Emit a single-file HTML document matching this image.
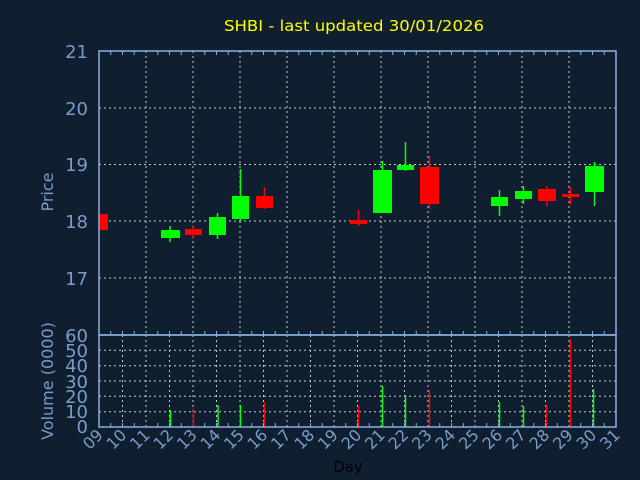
<!DOCTYPE html>
<html><head><meta charset="utf-8"><style>
html,body{margin:0;padding:0;background:#0f1f30;}
svg{display:block;}
text{font-family:"DejaVu Sans","Liberation Sans",sans-serif;}
</style></head><body>
<svg width="640" height="480" viewBox="0 0 640 480" xmlns="http://www.w3.org/2000/svg">
<rect width="640" height="480" fill="#0f1f30"/>
<text x="224" y="31" font-size="15.5" fill="#ffff00" textLength="260" lengthAdjust="spacingAndGlyphs">SHBI - last updated 30/01/2026</text>
<!-- price grid -->
<g stroke="#c8c8c8" stroke-width="1" stroke-dasharray="2,3">
<line x1="99" y1="108" x2="616" y2="108"/><line x1="99" y1="164.5" x2="616" y2="164.5"/>
<line x1="99" y1="221" x2="616" y2="221"/><line x1="99" y1="278" x2="616" y2="278"/>
<line x1="146" y1="51" x2="146" y2="335"/><line x1="193" y1="51" x2="193" y2="335"/>
<line x1="240" y1="51" x2="240" y2="335"/><line x1="287" y1="51" x2="287" y2="335"/>
<line x1="334" y1="51" x2="334" y2="335"/><line x1="381" y1="51" x2="381" y2="335"/>
<line x1="428" y1="51" x2="428" y2="335"/><line x1="475" y1="51" x2="475" y2="335"/>
<line x1="522" y1="51" x2="522" y2="335"/><line x1="569" y1="51" x2="569" y2="335"/>
</g>
<!-- volume grid -->
<g stroke="#c8c8c8" stroke-width="1" stroke-dasharray="2,3">
<line x1="99" y1="350.3" x2="616" y2="350.3"/><line x1="99" y1="365.7" x2="616" y2="365.7"/>
<line x1="99" y1="381" x2="616" y2="381"/><line x1="99" y1="396.3" x2="616" y2="396.3"/>
<line x1="99" y1="411.7" x2="616" y2="411.7"/>
<line x1="122.5" y1="335" x2="122.5" y2="427"/><line x1="146" y1="335" x2="146" y2="427"/>
<line x1="169.5" y1="335" x2="169.5" y2="427"/><line x1="193" y1="335" x2="193" y2="427"/>
<line x1="216.5" y1="335" x2="216.5" y2="427"/><line x1="240" y1="335" x2="240" y2="427"/>
<line x1="263.5" y1="335" x2="263.5" y2="427"/><line x1="287" y1="335" x2="287" y2="427"/>
<line x1="310.5" y1="335" x2="310.5" y2="427"/><line x1="334" y1="335" x2="334" y2="427"/>
<line x1="357.5" y1="335" x2="357.5" y2="427"/><line x1="381" y1="335" x2="381" y2="427"/>
<line x1="404.5" y1="335" x2="404.5" y2="427"/><line x1="428" y1="335" x2="428" y2="427"/>
<line x1="451.5" y1="335" x2="451.5" y2="427"/><line x1="475" y1="335" x2="475" y2="427"/>
<line x1="498.5" y1="335" x2="498.5" y2="427"/><line x1="522" y1="335" x2="522" y2="427"/>
<line x1="545.5" y1="335" x2="545.5" y2="427"/><line x1="569" y1="335" x2="569" y2="427"/>
<line x1="592.5" y1="335" x2="592.5" y2="427"/>
</g>
<!-- candles -->
<g stroke-width="1.5">
<rect x="99" y="214" width="9" height="16" fill="#ff0000"/>
<line x1="170" y1="226" x2="170" y2="242" stroke="#00ff00"/><rect x="161" y="230" width="19" height="8" fill="#00ff00"/>
<line x1="193.5" y1="225" x2="193.5" y2="239" stroke="#ff0000"/><rect x="185" y="229" width="17" height="6" fill="#ff0000"/>
<line x1="217.5" y1="213" x2="217.5" y2="239" stroke="#00ff00"/><rect x="209" y="217" width="17" height="18" fill="#00ff00"/>
<line x1="240.5" y1="169" x2="240.5" y2="221" stroke="#00ff00"/><rect x="232" y="196" width="17" height="23" fill="#00ff00"/>
<line x1="264.5" y1="187" x2="264.5" y2="209" stroke="#ff0000"/><rect x="256" y="196" width="17" height="12" fill="#ff0000"/>
<line x1="358.5" y1="210" x2="358.5" y2="226" stroke="#ff0000"/><rect x="350" y="220" width="17" height="4" fill="#ff0000"/>
<line x1="382.5" y1="161" x2="382.5" y2="213" stroke="#00ff00"/><rect x="373" y="170" width="19" height="43" fill="#00ff00"/>
<line x1="405.5" y1="142" x2="405.5" y2="171" stroke="#00ff00"/><rect x="397" y="165" width="17" height="5" fill="#00ff00"/>
<line x1="429.5" y1="156" x2="429.5" y2="209" stroke="#ff0000"/><rect x="420" y="167" width="19" height="37" fill="#ff0000"/>
<line x1="499.5" y1="190" x2="499.5" y2="216" stroke="#00ff00"/><rect x="491" y="197" width="17" height="9" fill="#00ff00"/>
<line x1="523.5" y1="186" x2="523.5" y2="204" stroke="#00ff00"/><rect x="515" y="191" width="17" height="8" fill="#00ff00"/>
<line x1="547" y1="186" x2="547" y2="206" stroke="#ff0000"/><rect x="538" y="189" width="18" height="12" fill="#ff0000"/>
<line x1="570.5" y1="187" x2="570.5" y2="205" stroke="#ff0000"/><rect x="562" y="194" width="17" height="3" fill="#ff0000"/>
<line x1="594.5" y1="162" x2="594.5" y2="206" stroke="#00ff00"/><rect x="585" y="166" width="19" height="26" fill="#00ff00"/>
</g>
<!-- volume bars -->
<g stroke-width="1.5">
<line x1="170.5" y1="410" x2="170.5" y2="427" stroke="#00ff00"/>
<line x1="193.5" y1="409" x2="193.5" y2="427" stroke="#ff0000"/>
<line x1="218" y1="405" x2="218" y2="427" stroke="#00ff00"/>
<line x1="240.5" y1="405" x2="240.5" y2="427" stroke="#00ff00"/>
<line x1="264.5" y1="402" x2="264.5" y2="427" stroke="#ff0000"/>
<line x1="358.5" y1="406" x2="358.5" y2="427" stroke="#ff0000"/>
<line x1="382.5" y1="386" x2="382.5" y2="427" stroke="#00ff00"/>
<line x1="405.5" y1="395" x2="405.5" y2="427" stroke="#00ff00"/>
<line x1="429.5" y1="390" x2="429.5" y2="427" stroke="#ff0000"/>
<line x1="499.5" y1="402" x2="499.5" y2="427" stroke="#00ff00"/>
<line x1="523.5" y1="406" x2="523.5" y2="427" stroke="#00ff00"/>
<line x1="546.5" y1="405" x2="546.5" y2="427" stroke="#ff0000"/>
<line x1="570.5" y1="339" x2="570.5" y2="427" stroke="#ff0000"/>
<line x1="593.5" y1="389" x2="593.5" y2="427" stroke="#00ff00"/>
</g>
<!-- frames -->
<g stroke="#8aaee0" stroke-width="1.5" fill="none">
<rect x="99" y="51" width="517" height="284"/>
<rect x="99" y="335" width="517" height="92"/>
</g>
<!-- minor ticks -->
<g stroke="#8aaee0" stroke-width="1">
<path d="M110.75 51v4M122.5 51v4M134.25 51v4M157.75 51v4M169.5 51v4M181.25 51v4M204.75 51v4M216.5 51v4M228.25 51v4M251.75 51v4M263.5 51v4M275.25 51v4M298.75 51v4M310.5 51v4M322.25 51v4M345.75 51v4M357.5 51v4M369.25 51v4M392.75 51v4M404.5 51v4M416.25 51v4M439.75 51v4M451.5 51v4M463.25 51v4M486.75 51v4M498.5 51v4M510.25 51v4M533.75 51v4M545.5 51v4M557.25 51v4M580.75 51v4M592.5 51v4M604.25 51v4"/>
<path d="M110.75 335v-4M122.5 335v-4M134.25 335v-4M157.75 335v-4M169.5 335v-4M181.25 335v-4M204.75 335v-4M216.5 335v-4M228.25 335v-4M251.75 335v-4M263.5 335v-4M275.25 335v-4M298.75 335v-4M310.5 335v-4M322.25 335v-4M345.75 335v-4M357.5 335v-4M369.25 335v-4M392.75 335v-4M404.5 335v-4M416.25 335v-4M439.75 335v-4M451.5 335v-4M463.25 335v-4M486.75 335v-4M498.5 335v-4M510.25 335v-4M533.75 335v-4M545.5 335v-4M557.25 335v-4M580.75 335v-4M592.5 335v-4M604.25 335v-4"/>
<path d="M110.75 427v-4M122.5 427v-4M134.25 427v-4M157.75 427v-4M169.5 427v-4M181.25 427v-4M204.75 427v-4M216.5 427v-4M228.25 427v-4M251.75 427v-4M263.5 427v-4M275.25 427v-4M298.75 427v-4M310.5 427v-4M322.25 427v-4M345.75 427v-4M357.5 427v-4M369.25 427v-4M392.75 427v-4M404.5 427v-4M416.25 427v-4M439.75 427v-4M451.5 427v-4M463.25 427v-4M486.75 427v-4M498.5 427v-4M510.25 427v-4M533.75 427v-4M545.5 427v-4M557.25 427v-4M580.75 427v-4M592.5 427v-4M604.25 427v-4"/>
</g>
<!-- y labels -->
<g fill="#7a9cc8" font-size="18" text-anchor="end">
<text x="88" y="58">21</text><text x="88" y="115">20</text><text x="88" y="171">19</text>
<text x="88" y="228">18</text><text x="88" y="285">17</text>
<text x="88" y="342">60</text><text x="88" y="357">50</text><text x="88" y="372">40</text>
<text x="88" y="388">30</text><text x="88" y="403">20</text><text x="88" y="418">10</text><text x="88" y="433">0</text>
</g>
<text transform="translate(53,192) rotate(-90)" fill="#7a9cc8" font-size="16" text-anchor="middle">Price</text>
<text transform="translate(53,381) rotate(-90)" fill="#7a9cc8" font-size="16" text-anchor="middle">Volume (0000)</text>
<!-- x labels -->
<g fill="#7a9cc8" font-size="16" text-anchor="end">
<text transform="translate(104,436) rotate(-45)">09</text>
<text transform="translate(127.5,436) rotate(-45)">10</text>
<text transform="translate(151,436) rotate(-45)">11</text>
<text transform="translate(174.5,436) rotate(-45)">12</text>
<text transform="translate(198,436) rotate(-45)">13</text>
<text transform="translate(221.5,436) rotate(-45)">14</text>
<text transform="translate(245,436) rotate(-45)">15</text>
<text transform="translate(268.5,436) rotate(-45)">16</text>
<text transform="translate(292,436) rotate(-45)">17</text>
<text transform="translate(315.5,436) rotate(-45)">18</text>
<text transform="translate(339,436) rotate(-45)">19</text>
<text transform="translate(362.5,436) rotate(-45)">20</text>
<text transform="translate(386,436) rotate(-45)">21</text>
<text transform="translate(409.5,436) rotate(-45)">22</text>
<text transform="translate(433,436) rotate(-45)">23</text>
<text transform="translate(456.5,436) rotate(-45)">24</text>
<text transform="translate(480,436) rotate(-45)">25</text>
<text transform="translate(503.5,436) rotate(-45)">26</text>
<text transform="translate(527,436) rotate(-45)">27</text>
<text transform="translate(550.5,436) rotate(-45)">28</text>
<text transform="translate(574,436) rotate(-45)">29</text>
<text transform="translate(597.5,436) rotate(-45)">30</text>
<text transform="translate(621,436) rotate(-45)">31</text>
</g>
<text x="348" y="472" fill="#000000" font-size="15" text-anchor="middle">Day</text>
</svg>
</body></html>
